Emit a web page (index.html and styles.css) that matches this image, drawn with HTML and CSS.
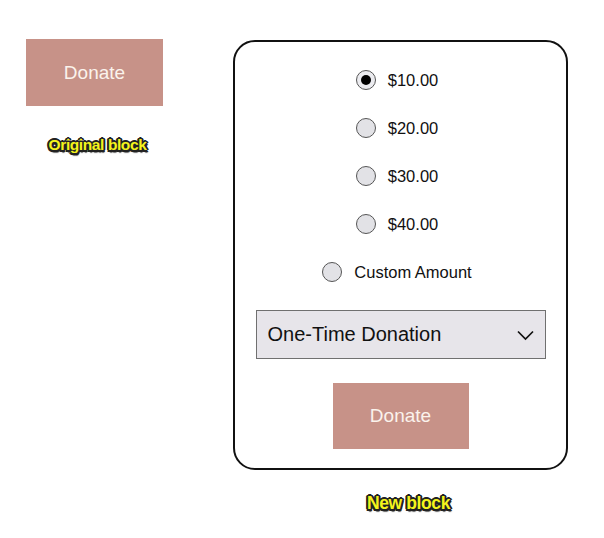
FILE: index.html
```html
<!DOCTYPE html>
<html>
<head>
<meta charset="utf-8">
<link rel="stylesheet" href="styles.css">
</head>
<body>
  <div class="col-left">
    <div class="btn">Donate</div>
    <div class="tag tag-orig">Original block</div>
  </div>
  <div class="col-right">
    <div class="card">
      <div class="row"><span class="radio checked"></span><span class="lbl">$10.00</span></div>
      <div class="row"><span class="radio"></span><span class="lbl">$20.00</span></div>
      <div class="row"><span class="radio"></span><span class="lbl">$30.00</span></div>
      <div class="row"><span class="radio"></span><span class="lbl">$40.00</span></div>
      <div class="row"><span class="radio"></span><span class="lbl">Custom Amount</span></div>
      <div class="select">
        <span>One-Time Donation</span>
        <svg class="chev" width="17" height="11" viewBox="0 0 17 11"><polyline points="1,1.5 8.5,9 16,1.5" fill="none" stroke="#111" stroke-width="1.7"/></svg>
      </div>
      <div class="btn">Donate</div>
    </div>
    <div class="tag tag-new">New block</div>
  </div>
</body>
</html>
```
FILE: styles.css
```css
html, body {
  margin: 0;
  padding: 0;
  background: #fff;
}
body {
  width: 604px;
  height: 538px;
  display: flex;
  align-items: flex-start;
  font-family: "Liberation Sans", Arial, sans-serif;
  color: #111;
}
.col-left {
  margin: 39px 0 0 26px;
  width: 137px;
  display: flex;
  flex-direction: column;
  align-items: center;
}
.btn {
  width: 137px;
  height: 67px;
  background: #c79288;
  color: #fbf3ec;
  font-size: 19px;
  display: flex;
  align-items: center;
  justify-content: center;
  flex-shrink: 0;
}
.tag {
  font-weight: bold;
  color: #f4f41c;
  letter-spacing: -0.4px;
  text-shadow:
    -1.5px -1.5px 0 #222, 1.5px -1.5px 0 #222, -1.5px 1.5px 0 #222, 1.5px 1.5px 0 #222,
    0 -2px 0 #222, 0 2px 0 #222, -2px 0 0 #222, 2px 0 0 #222,
    1px 2.5px 1px #666;
}
.tag-orig {
  font-size: 15.5px;
  margin-top: 30px;
  margin-left: 6px;
}
.col-right {
  margin: 40px 0 0 70px;
  display: flex;
  flex-direction: column;
  align-items: center;
}
.card {
  width: 331px;
  border: 2px solid #111;
  border-radius: 22px;
  padding: 14px 0 0 0;
  box-sizing: content-box;
  height: 412px;
  display: flex;
  flex-direction: column;
  align-items: center;
}
.row {
  height: 48px;
  display: flex;
  align-items: center;
  gap: 12px;
  font-size: 16px;
  padding-right: 7px;
}
.lbl {
  font-size: 16.5px;
}
.radio {
  width: 18px;
  height: 18px;
  border: 1px solid #555;
  border-radius: 50%;
  background: #e2e2e6;
  display: flex;
  align-items: center;
  justify-content: center;
}
.radio.checked {
  background: #ececf0;
}
.radio.checked::after {
  content: "";
  width: 10px;
  height: 10px;
  border-radius: 50%;
  background: #000;
}
.select {
  margin-top: 14px;
  height: 47px;
  border: 1px solid #707070;
  background: #e7e5ea;
  display: flex;
  align-items: center;
  justify-content: space-between;
  padding: 0 11px 0 11px;
  box-sizing: content-box;
  width: 266px;
  font-size: 20px;
  color: #111;
}
.chev {
  margin-top: 1px;
}
.card .btn {
  margin-top: 24px;
  width: 136px;
  height: 66px;
}
.tag-new {
  font-size: 17.5px;
  margin-top: 23px;
  margin-left: 16px;
}
```
